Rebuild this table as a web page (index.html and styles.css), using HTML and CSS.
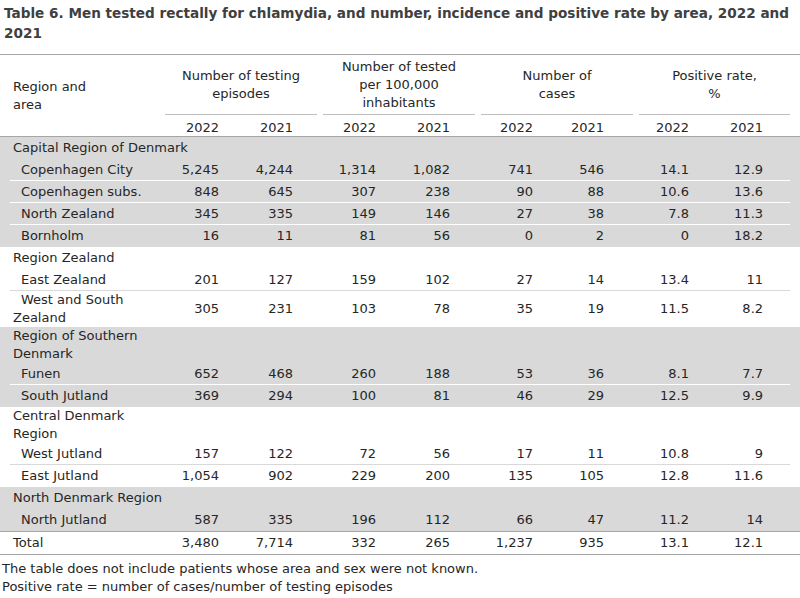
FILE: index.html
```html
<!DOCTYPE html>
<html>
<head>
<meta charset="utf-8">
<link rel="stylesheet" href="styles.css">
</head>
<body>
<div class="title">Table 6. Men tested rectally for chlamydia, and number, incidence and positive rate by area, 2022 and<br>2021</div>
<table class="tbl">
  <colgroup>
    <col class="c-area"><col class="c-num"><col class="c-num"><col class="c-num"><col class="c-num"><col class="c-num"><col class="c-num"><col class="c-num"><col class="c-last">
  </colgroup>
  <thead>
    <tr class="hd1">
      <th rowspan="2" class="area-h">Region and<br>area</th>
      <th colspan="2" class="gh"><div class="grp">Number of testing<br>episodes</div></th>
      <th colspan="2" class="gh"><div class="grp">Number of tested<br>per 100,000<br>inhabitants</div></th>
      <th colspan="2" class="gh"><div class="grp">Number of<br>cases</div></th>
      <th colspan="2" class="gh gh-last"><div class="grp">Positive rate,<br>%</div></th>
    </tr>
    <tr class="hd2 nums">
      <th>2022</th><th>2021</th><th>2022</th><th>2021</th><th>2022</th><th>2021</th><th>2022</th><th>2021</th>
    </tr>
  </thead>
  <tbody>
    <tr class="shade reg"><td colspan="9" class="name">Capital Region of Denmark</td></tr>
    <tr class="shade row nums"><td class="name sub">Copenhagen City</td><td>5,245</td><td>4,244</td><td>1,314</td><td>1,082</td><td>741</td><td>546</td><td>14.1</td><td>12.9</td></tr>
    <tr class="shade sep"><td colspan="9"><div class="line"></div></td></tr>
    <tr class="shade row nums"><td class="name sub">Copenhagen subs.</td><td>848</td><td>645</td><td>307</td><td>238</td><td>90</td><td>88</td><td>10.6</td><td>13.6</td></tr>
    <tr class="shade sep"><td colspan="9"><div class="line"></div></td></tr>
    <tr class="shade row nums"><td class="name sub">North Zealand</td><td>345</td><td>335</td><td>149</td><td>146</td><td>27</td><td>38</td><td>7.8</td><td>11.3</td></tr>
    <tr class="shade sep"><td colspan="9"><div class="line"></div></td></tr>
    <tr class="shade row end nums"><td class="name sub">Bornholm</td><td>16</td><td>11</td><td>81</td><td>56</td><td>0</td><td>2</td><td>0</td><td>18.2</td></tr>

    <tr class="reg"><td colspan="9" class="name">Region Zealand</td></tr>
    <tr class="row nums"><td class="name sub">East Zealand</td><td>201</td><td>127</td><td>159</td><td>102</td><td>27</td><td>14</td><td>13.4</td><td>11</td></tr>
    <tr class="sep"><td colspan="9"><div class="line"></div></td></tr>
    <tr class="row wrap nums"><td class="name sub">West and South<br>Zealand</td><td>305</td><td>231</td><td>103</td><td>78</td><td>35</td><td>19</td><td>11.5</td><td>8.2</td></tr>

    <tr class="shade reg wrap"><td colspan="9" class="name">Region of Southern<br>Denmark</td></tr>
    <tr class="shade row nums"><td class="name sub">Funen</td><td>652</td><td>468</td><td>260</td><td>188</td><td>53</td><td>36</td><td>8.1</td><td>7.7</td></tr>
    <tr class="shade sep"><td colspan="9"><div class="line"></div></td></tr>
    <tr class="shade row end nums"><td class="name sub">South Jutland</td><td>369</td><td>294</td><td>100</td><td>81</td><td>46</td><td>29</td><td>12.5</td><td>9.9</td></tr>

    <tr class="reg wrap"><td colspan="9" class="name">Central Denmark<br>Region</td></tr>
    <tr class="row nums"><td class="name sub">West Jutland</td><td>157</td><td>122</td><td>72</td><td>56</td><td>17</td><td>11</td><td>10.8</td><td>9</td></tr>
    <tr class="sep"><td colspan="9"><div class="line"></div></td></tr>
    <tr class="row end nums"><td class="name sub">East Jutland</td><td>1,054</td><td>902</td><td>229</td><td>200</td><td>135</td><td>105</td><td>12.8</td><td>11.6</td></tr>

    <tr class="shade reg"><td colspan="9" class="name">North Denmark Region</td></tr>
    <tr class="shade row end nums last-body"><td class="name sub">North Jutland</td><td>587</td><td>335</td><td>196</td><td>112</td><td>66</td><td>47</td><td>11.2</td><td>14</td></tr>

    <tr class="row end nums total"><td class="name">Total</td><td>3,480</td><td>7,714</td><td>332</td><td>265</td><td>1,237</td><td>935</td><td>13.1</td><td>12.1</td></tr>
  </tbody>
</table>
<div class="notes">
  <p>The table does not include patients whose area and sex were not known.</p>
  <p>Positive rate = number of cases/number of testing episodes</p>
</div>
</body>
</html>
```

FILE: styles.css
```css
html, body {
  margin: 0;
  padding: 0;
  background: #ffffff;
}
body {
  width: 800px;
  font-family: "DejaVu Sans", sans-serif;
  font-size: 13px;
  color: #262626;
}
.title {
  padding: 3px 0 0 4px;
  font-weight: bold;
  font-size: 13.6px;
  line-height: 20px;
  color: #404040;
  white-space: nowrap;
  margin-bottom: 11px;
}
.tbl {
  width: 800px;
  table-layout: fixed;
  border-collapse: collapse;
  border-top: 1px solid #a6a6a6;
}
.c-area { width: 162px; }
.c-num { width: 79px; }
.c-last { width: 85px; }

.tbl th, .tbl td {
  padding: 0;
  font-weight: normal;
  line-height: 18px;
  white-space: nowrap;
}
.area-h {
  text-align: left;
  vertical-align: middle;
  padding-left: 13px !important;
}
.gh {
  padding: 0 3px !important;
  vertical-align: top;
}
.gh-last {
  padding: 0 10px 0 3px !important;
}
.grp {
  height: 60px;
  box-sizing: border-box;
  border-bottom: 1px solid #bfbfbf;
  display: flex;
  align-items: center;
  justify-content: center;
  text-align: center;
}
.hd2 th {
  padding-top: 4px;
  line-height: 17px;
  text-align: right;
}
.hd2 {
  border-bottom: 1px solid #a6a6a6;
}

.nums td, .nums th { text-align: right; }
.nums > :nth-child(2) { padding-right: 22px; }
.nums > :nth-child(3) { padding-right: 27px; }
.nums > :nth-child(4) { padding-right: 23px; }
.nums > :nth-child(5) { padding-right: 28px; }
.nums > :nth-child(6) { padding-right: 24px; }
.nums > :nth-child(7) { padding-right: 32px; }
.nums > :nth-child(8) { padding-right: 26px; }
.nums > :nth-child(9) { padding-right: 37px; }
.hd2 > :nth-child(1) { padding-right: 22px; }
.hd2 > :nth-child(2) { padding-right: 27px; }
.hd2 > :nth-child(3) { padding-right: 23px; }
.hd2 > :nth-child(4) { padding-right: 28px; }
.hd2 > :nth-child(5) { padding-right: 24px; }
.hd2 > :nth-child(6) { padding-right: 32px; }
.hd2 > :nth-child(7) { padding-right: 26px; }
.hd2 > :nth-child(8) { padding-right: 37px; }

.shade { background: #d9d9d9; }

.tbl td.name {
  text-align: left;
  padding-left: 13px;
  vertical-align: middle;
}
.tbl td.sub {
  text-indent: 8px;
}
.reg td {
  padding-top: 2px;
  padding-bottom: 2px;
}
.row td {
  padding-top: 2px;
  padding-bottom: 1px;
  vertical-align: middle;
}
.row.end td {
  padding-bottom: 2px;
}
.tbl tr.wrap td {
  padding-top: 0;
  padding-bottom: 0;
}
.sep td {
  height: 1px;
  padding: 0;
  line-height: 0;
}
.line {
  height: 1px;
  margin: 0 10px;
  background: #d9d9d9;
}
.shade .line { background: #ffffff; }
.last-body {
  border-bottom: 1px solid #a6a6a6;
}
.total {
  border-bottom: 1px solid #a6a6a6;
}
.notes {
  padding: 5px 0 0 2px;
}
.notes p {
  margin: 0;
  line-height: 18px;
}
```
